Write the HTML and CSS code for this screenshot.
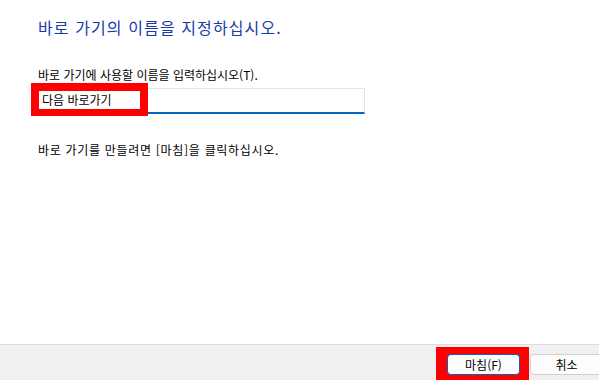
FILE: index.html
```html
<!DOCTYPE html>
<html lang="ko">
<head>
<meta charset="utf-8">
<link rel="stylesheet" href="styles.css">
</head>
<body>
<div class="page">
  <div class="content">
    <h1 class="title">바로 가기의 이름을 지정하십시오.</h1>
    <div class="label">바로 가기에 사용할 이름을 입력하십시오(T).</div>
    <div class="field">
      <div class="input"><span class="value">다음 바로가기</span></div>
      <div class="mark-input"></div>
    </div>
    <div class="hint">바로 가기를 만들려면 [마침]을 클릭하십시오.</div>
  </div>
  <div class="footer">
    <div class="buttons">
      <span class="mark-btn"><button class="btn btn-default">마침(F)</button></span>
      <button class="btn">취소</button>
    </div>
  </div>
</div>
</body>
</html>
```

FILE: styles.css
```css
html, body {
  margin: 0;
  padding: 0;
  background: #ffffff;
}
body {
  width: 599px;
  height: 380px;
  overflow: hidden;
  font-family: "Noto Sans CJK KR", "Noto Sans", sans-serif;
  font-size: 12px;
  color: #000000;
}
.page {
  display: flex;
  flex-direction: column;
  height: 380px;
}
.content {
  flex: 1;
  padding: 17px 0 0 38px;
}
.title {
  margin: 0;
  font-size: 16px;
  font-weight: normal;
  line-height: 20px;
  letter-spacing: 1.1px;
  color: #1a3aa6;
}
.label {
  margin-top: 30px;
  line-height: 16px;
}
.field {
  position: relative;
  width: 327px;
  margin-top: 5px;
}
.input {
  box-sizing: border-box;
  height: 26px;
  border: 1px solid #e3e3e3;
  border-bottom: 2px solid #0067c0;
  padding: 0 0 0 3px;
  line-height: 22px;
  font-size: 12px;
  color: #000;
}
.value {
  position: relative;
  z-index: 3;
}
.mark-input {
  position: absolute;
  left: -7px;
  top: -5px;
  width: 117px;
  height: 33px;
  box-sizing: border-box;
  border: 8px solid #ff0000;
  border-bottom-width: 7px;
  background: #ffffff;
  z-index: 2;
}
.hint {
  margin-top: 28px;
  line-height: 16px;
  letter-spacing: 0.7px;
}
.footer {
  height: 35px;
  border-top: 1px solid #dcdcdc;
  background: #f0f0f0;
  display: flex;
  justify-content: flex-end;
  overflow: hidden;
}
.buttons {
  display: flex;
  gap: 10px;
  margin-top: 9px;
  margin-right: -4px;
}
.mark-btn {
  position: relative;
  display: flex;
}
.mark-btn::before {
  content: "";
  position: absolute;
  left: -11px;
  right: -9px;
  top: -7px;
  bottom: -10px;
  background: #ff0000;
}
.btn {
  position: relative;
  box-sizing: border-box;
  width: 73px;
  height: 21px;
  padding: 0;
  border: 1px solid #d0d0d0;
  border-radius: 4px;
  background: #fdfdfd;
  font-family: "Noto Sans CJK KR", "Noto Sans", sans-serif;
  font-size: 12px;
  line-height: 18px;
  color: #000;
}
.btn-default {
  border: 1px solid #0067c0;
  box-shadow: inset 0 0 0 1px #ffffff;
}
```
